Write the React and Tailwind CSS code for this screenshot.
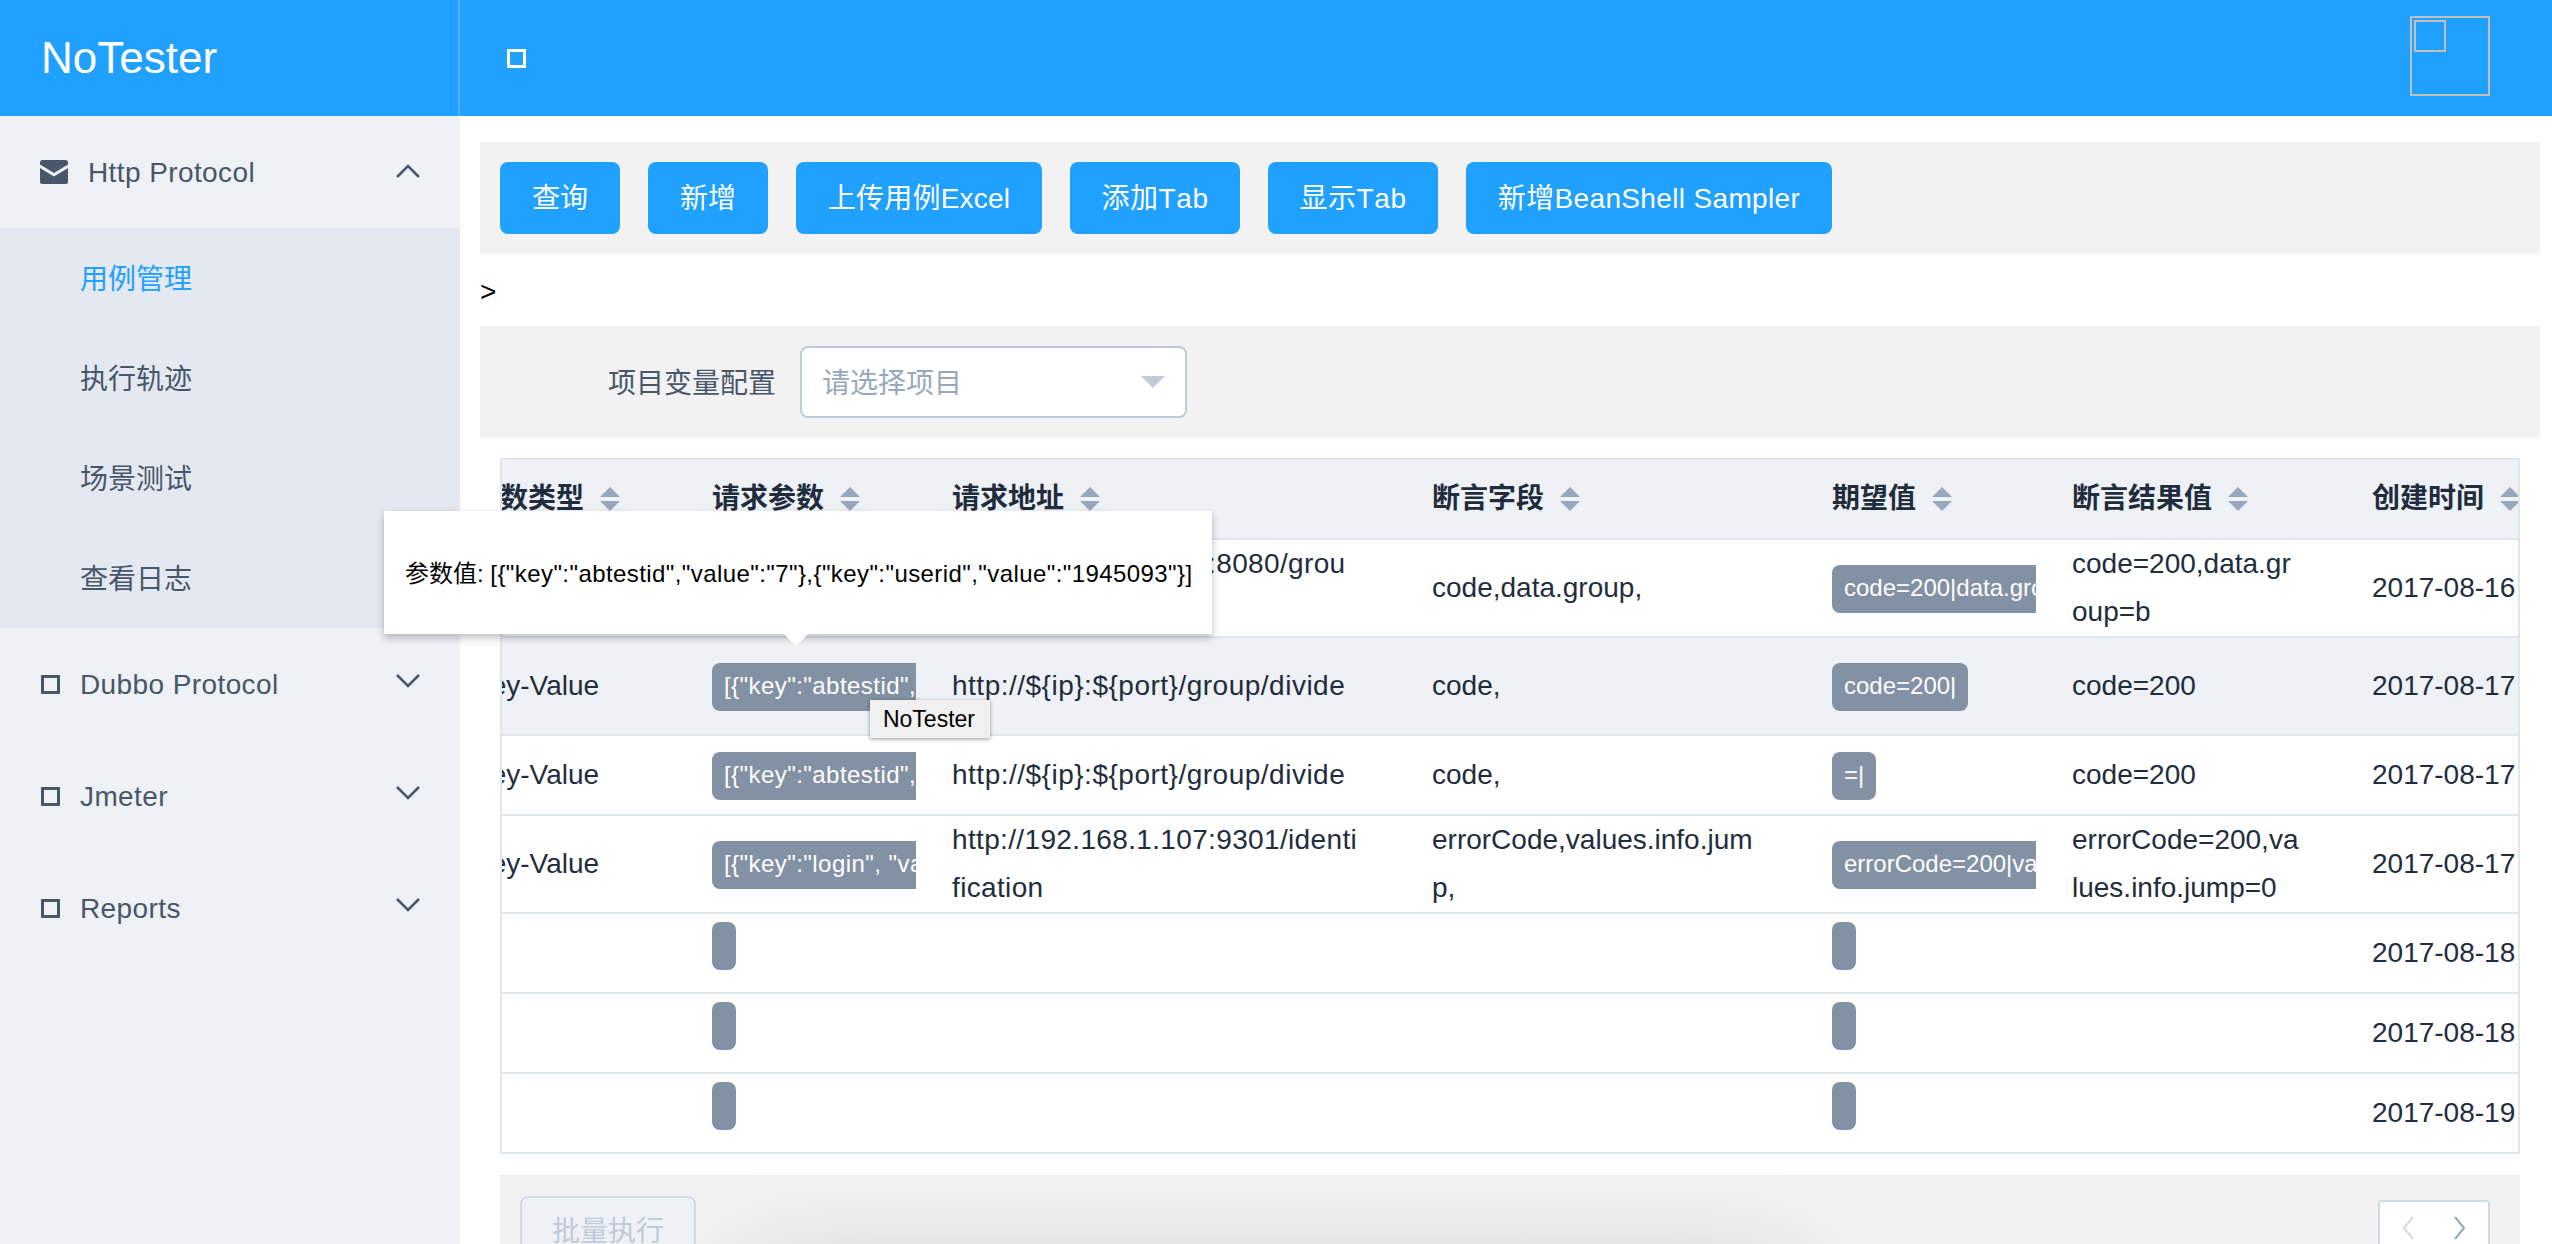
const rows = [
  { h: 'h-[97px]', type: 'Key-Value', param: '[{"key":"abtestid","value":"7"},{"key":"userid","value":"1945093"}]', url: 'http://192.168.1.107:8080/group/divide', urlCls: 'tracking-[0.35px]', field: 'code,data.group,', expect: 'code=200|data.group=b|', result: 'code=200,data.group=b', time: '2017-08-16' },
  { h: 'h-[98px]', hover: true, type: 'Key-Value', param: '[{"key":"abtestid","value":"7"},{"key":"userid","value":"1945093"}]', url: 'http://${ip}:${port}/group/divide', urlCls: 'tracking-[0.5px]', field: 'code,', expect: 'code=200|', result: 'code=200', time: '2017-08-17' },
  { h: 'h-[80px]', type: 'Key-Value', param: '[{"key":"abtestid","value":"7"},{"key":"userid","value":"1945093"}]', url: 'http://${ip}:${port}/group/divide', urlCls: 'tracking-[0.5px]', field: 'code,', expect: '=|', result: 'code=200', time: '2017-08-17' },
  { h: 'h-[97px]', type: 'Key-Value', param: '[{"key":"login", "value":"test"}]', url: 'http://192.168.1.107:9301/identification', urlCls: 'tracking-[0.35px]', field: 'errorCode,values.info.jump,', expect: 'errorCode=200|values.info.jump=0|', result: 'errorCode=200,values.info.jump=0', time: '2017-08-17' },
  { h: 'h-[80px]', type: '', param: '', url: '', field: '', expect: '', result: '', time: '2017-08-18' },
  { h: 'h-[80px]', type: '', param: '', url: '', field: '', expect: '', result: '', time: '2017-08-18' },
  { h: 'h-[80px]', type: '', param: '', url: '', field: '', expect: '', result: '', time: '2017-08-19' },
];

const heads = ['参数类型', '请求参数', '请求地址', '断言字段', '期望值', '断言结果值', '创建时间'];

const buttons = [
  { label: '查询', cls: 'w-[120px]' },
  { label: '新增', cls: 'w-[120px]' },
  { label: '上传用例Excel', cls: 'w-[246px] tracking-[0.2px]' },
  { label: '添加Tab', cls: 'w-[170px] tracking-[0.6px]' },
  { label: '显示Tab', cls: 'w-[170px] tracking-[0.6px]' },
  { label: '新增BeanShell Sampler', cls: 'w-[366px] tracking-[0.35px]' },
];

function Chevron({ up }) {
  return (
    <svg width="26" height="14" viewBox="0 0 26 14" fill="none" stroke="#48576a" strokeWidth="2.6" className="shrink-0">
      <path d={up ? 'M2 13 L13 2 L24 13' : 'M2 1 L13 12 L24 1'} />
    </svg>
  );
}

function Sort() {
  return (
    <span className="ml-4 flex flex-col gap-[4px]">
      <span className="h-0 w-0 border-x-[10px] border-b-[10px] border-x-transparent border-b-[#97a8be]" />
      <span className="h-0 w-0 border-x-[10px] border-t-[10px] border-x-transparent border-t-[#97a8be]" />
    </span>
  );
}

function Tag({ text, wide }) {
  return (
    <div className="w-[204px] overflow-hidden">
      <span className={`inline-block h-[48px] whitespace-nowrap rounded-[8px] bg-[#8391a5] px-3 align-baseline text-[24px] leading-[46px] text-white ${wide ? 'tracking-[0.45px]' : ''}`}>{text}</span>
    </div>
  );
}

function MenuGroup({ label }) {
  return (
    <div className="flex h-[112px] items-center justify-between pl-[41px] pr-[39px] text-[28px] tracking-[0.4px] text-[#48576a]">
      <div className="flex items-center gap-[20px]">
        <span className="h-[19px] w-[19px] border-[3px] border-[#48576a]" />
        <span className="pt-[2px]">{label}</span>
      </div>
      <span className="mb-[6px]"><Chevron /></span>
    </div>
  );
}

export default function App() {
  return (
    <div className="relative flex h-[1244px] w-[2552px] flex-col overflow-hidden bg-white font-['Liberation_Sans','Noto_Sans_CJK_SC',sans-serif] text-[28px]">
      <header className="flex h-[116px] shrink-0 items-center bg-[#20a0ff]">
        <div className="flex h-full w-[460px] items-center border-r-2 border-r-[#58b2e6] pl-[41px] text-[44px] text-white">NoTester</div>
        <div className="ml-[47px] h-[19px] w-[19px] border-[3px] border-white" />
        <div className="mb-[4px] ml-auto mr-[62px] h-[80px] w-[80px] border-2 border-[#c0c0c0] p-[2px]">
          <div className="h-[32px] w-[32px] border-2 border-[#c0c0c0]" />
        </div>
      </header>

      <div className="flex min-h-0 flex-1">
        <aside className="w-[460px] shrink-0 bg-[#eef1f6]">
          <div className="flex h-[112px] items-center justify-between pl-[40px] pr-[39px] text-[28px] tracking-[0.4px] text-[#48576a]">
            <div className="flex items-center gap-[20px]">
              <svg width="28" height="24" viewBox="0 0 28 24">
                <path fill="#48576a" d="M2.5 0 H25.5 A2.5 2.5 0 0 1 28 2.5 V4.5 L14 13 L0 4.5 V2.5 A2.5 2.5 0 0 1 2.5 0 Z" />
                <path fill="#48576a" d="M0 8 L14 16.5 L28 8 V21.5 A2.5 2.5 0 0 1 25.5 24 H2.5 A2.5 2.5 0 0 1 0 21.5 Z" />
              </svg>
              <span className="pt-[1px]">Http Protocol</span>
            </div>
            <span className="mb-[2px]"><Chevron up /></span>
          </div>
          <div className="bg-[#e4e8f1] text-[28px] text-[#48576a]">
            <div className="flex h-[100px] items-center pl-[80px] pt-[3px] text-[#20a0ff]">用例管理</div>
            <div className="flex h-[100px] items-center pl-[80px] pt-[3px]">执行轨迹</div>
            <div className="flex h-[100px] items-center pl-[80px] pt-[3px]">场景测试</div>
            <div className="flex h-[100px] items-center pl-[80px] pt-[3px]">查看日志</div>
          </div>
          <MenuGroup label="Dubbo Protocol" />
          <MenuGroup label="Jmeter" />
          <MenuGroup label="Reports" />
        </aside>

        <main className="min-w-0 flex-1 pl-5 pr-3 pt-[26px]">
          <div className="flex h-[112px] items-center gap-[28px] bg-[#f2f2f2] px-5">
            {buttons.map((b) => (
              <button key={b.label} className={`h-[72px] rounded-[8px] bg-[#20a0ff] pt-[2px] text-[28px] text-white [font-kerning:none] ${b.cls}`}>{b.label}</button>
            ))}
          </div>
          <div className="flex h-[72px] items-center pt-[4px] text-[28px] text-black">&gt;</div>
          <div className="flex h-[112px] items-center bg-[#f2f2f2]">
            <span className="ml-[128px] w-[168px] pt-[4px] text-[#48576a]">项目变量配置</span>
            <div className="ml-[24px] flex h-[72px] w-[387px] items-center justify-between rounded-[8px] border-2 border-[#bfcbd9] bg-white pl-[20px] pr-[20px] text-[#97a8be]">
              <span className="pt-[4px]">请选择项目</span>
              <span className="h-0 w-0 border-x-[12px] border-t-[12px] border-x-transparent border-t-[#bfcbd9]" />
            </div>
          </div>

          <div className="mr-5 ml-5 mt-5 overflow-hidden border-x-2 border-t-2 border-[#dfe6ec]">
            <table className="ml-[-66px] w-[2500px] table-fixed border-separate border-spacing-0 text-[#1f2d3d]">
              <colgroup>
                <col className="w-[240px]" />
                <col className="w-[240px]" />
                <col className="w-[480px]" />
                <col className="w-[400px]" />
                <col className="w-[240px]" />
                <col className="w-[300px]" />
                <col className="w-[600px]" />
              </colgroup>
              <thead>
                <tr className="h-[80px] bg-[#eef1f6]">
                  {heads.map((h) => (
                    <th key={h} className="border-b-2 border-[#dfe6ec] pl-[36px] text-left font-bold">
                      <div className="flex items-center">{h}<Sort /></div>
                    </th>
                  ))}
                </tr>
              </thead>
              <tbody className="leading-[48px]">
                {rows.map((r, i) => (
                  <tr key={i} className={`${r.h} ${r.hover ? 'bg-[#eef1f6]' : 'bg-white'}`}>
                    <td className="border-b-2 border-[#dfe6ec] pl-[36px]">{r.type}</td>
                    <td className="border-b-2 border-[#dfe6ec] pl-[36px]"><Tag text={r.param} wide /></td>
                    <td className={`break-all border-b-2 border-[#dfe6ec] pl-[36px] pr-[37px] ${r.urlCls || ''}`}>{r.url}</td>
                    <td className="break-all border-b-2 border-[#dfe6ec] pl-[36px] pr-[36px]">{r.field}</td>
                    <td className="border-b-2 border-[#dfe6ec] pl-[36px]"><Tag text={r.expect} /></td>
                    <td className="break-all border-b-2 border-[#dfe6ec] pl-[36px] pr-[36px]">{r.result}</td>
                    <td className="border-b-2 border-[#dfe6ec] pl-[36px]">{r.time}</td>
                  </tr>
                ))}
              </tbody>
            </table>
          </div>

          <div className="relative mr-5 ml-5 mt-[21px] flex h-[71px] items-start justify-between overflow-hidden bg-[#f2f2f2] pl-[20px] pr-[30px] pt-[21px]">
            <div className="absolute left-[290px] top-[140px] h-[60px] w-[960px] bg-black/10 shadow-[0_0_110px_50px_rgba(0,0,0,0.14)]" />
            <button className="relative h-[72px] w-[176px] shrink-0 rounded-[8px] border-2 border-[#d1dbe5] bg-[#eef1f6] text-[28px] text-[#bfcbd9]">批量执行</button>
            <div className="relative mt-[4px] flex h-[56px] w-[112px] shrink-0 items-center justify-between rounded-[4px] border-2 border-[#d1dbe5] bg-white px-[22px]">
              <svg width="12" height="24" viewBox="0 0 12 24" fill="none" stroke="#d1dbe5" strokeWidth="2"><path d="M11 1 L2 12 L11 23" /></svg>
              <svg width="12" height="24" viewBox="0 0 12 24" fill="none" stroke="#97a8be" strokeWidth="2"><path d="M1 1 L10 12 L1 23" /></svg>
            </div>
          </div>
        </main>
      </div>

      <div className="absolute left-[384px] top-[511px] flex h-[123px] w-[828px] items-center whitespace-pre bg-white pl-[21px] pt-[2px] text-[24px] text-black shadow-[0_4px_8px_rgba(0,0,0,0.25)]">
        <span>{'参数值: '}</span>
        <span className="tracking-[0.42px]">{'[{"key":"abtestid","value":"7"},{"key":"userid","value":"1945093"}]'}</span>
        <span className="absolute left-[400px] top-[123px] h-0 w-0 border-x-[12px] border-t-[12px] border-x-transparent border-t-white" />
      </div>

      <div className="absolute left-[870px] top-[700px] flex h-[38px] w-[120px] items-center justify-center bg-[#f0f0f0] pr-[2px] text-[23px] text-black shadow-[0_1px_4px_rgba(0,0,0,0.4)]">NoTester</div>
    </div>
  );
}
